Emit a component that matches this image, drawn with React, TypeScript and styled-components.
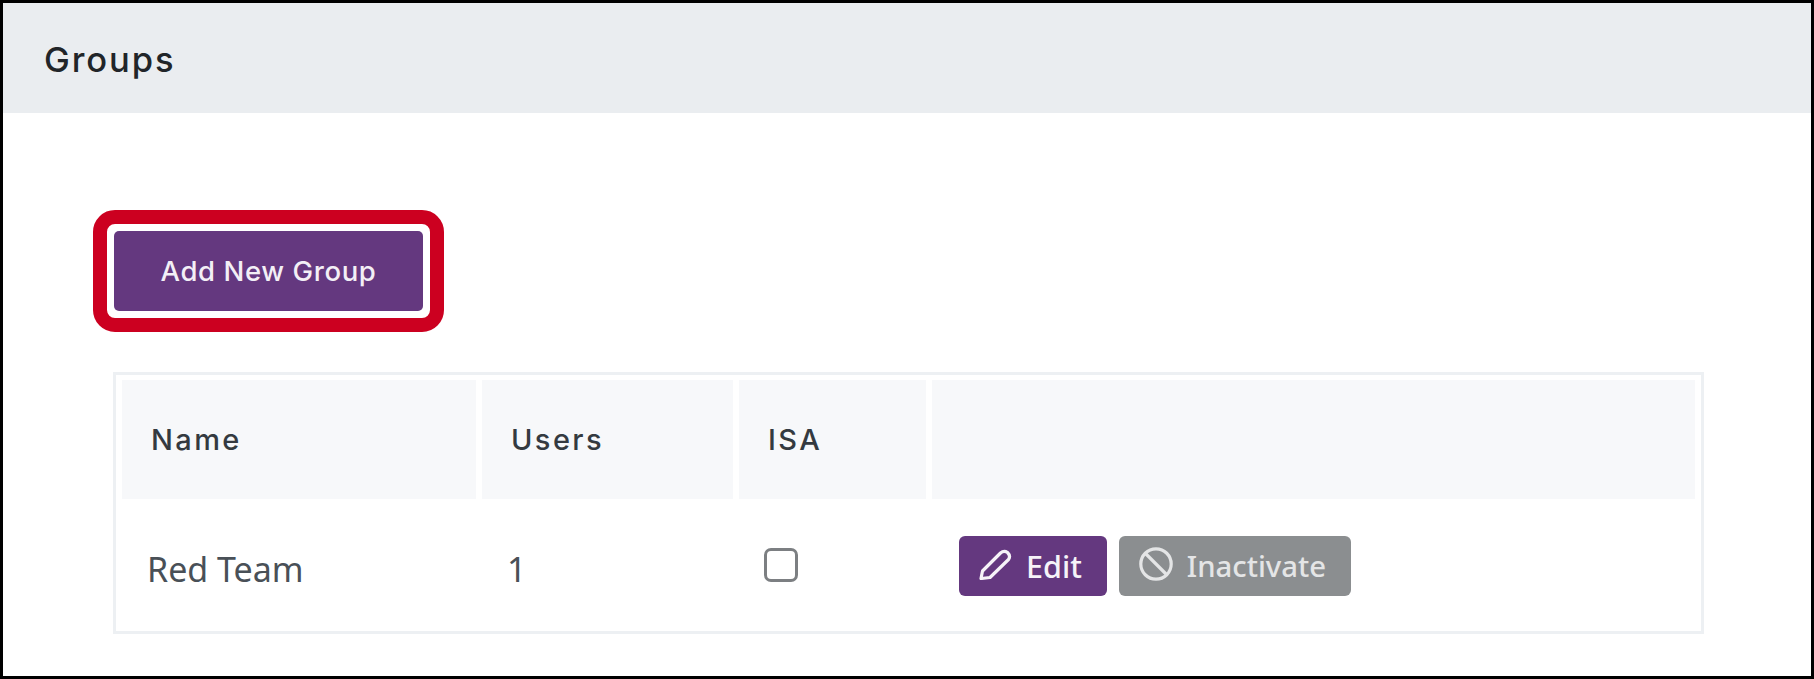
import * as React from "react"
import styled, {createGlobalStyle} from "styled-components"

const GlobalStyle = createGlobalStyle`
  html, body {
    margin: 0;
    padding: 0;
    background: #fff;
  }
`

const PencilIcon = () => (
    <svg width="33" height="31" viewBox="0 0 33 31" fill="none" stroke="currentColor" strokeWidth="3.2" strokeLinejoin="round">
        <path d="M2 29.5 L3.5 22 L21.5 4 Q25 1 28.5 3.5 Q32 7 29.5 10.5 L11 28.5 Z" />
    </svg>
)

const BanIcon = () => (
    <svg width="34" height="34" viewBox="0 0 34 34" fill="none" stroke="currentColor" strokeWidth="3.2">
        <circle cx="17" cy="17" r="15.2" />
        <path d="M6.5 6.5 L27.5 27.5" />
    </svg>
)

export default function App() {
    return (
        <>
            <GlobalStyle />
            <Frame>
                <PanelHeader>Groups</PanelHeader>
                <Callout>
                    <AddButton>Add New Group</AddButton>
                </Callout>
                <GroupsTable>
                    <colgroup>
                        <col width={354} />
                        <col width={251} />
                        <col width={187} />
                        <col />
                    </colgroup>
                    <thead>
                        <tr>
                            <HeadCell>Name</HeadCell>
                            <HeadCell>Users</HeadCell>
                            <HeadCell>ISA</HeadCell>
                            <HeadCell />
                        </tr>
                    </thead>
                    <tbody>
                        <tr>
                            <BodyCell>Red Team</BodyCell>
                            <BodyCell>1</BodyCell>
                            <ControlCell><CheckBox /></ControlCell>
                            <ActionsCell>
                                <Actions>
                                    <ActionButton><PencilIcon />Edit</ActionButton>
                                    <ActionButton $muted><BanIcon />Inactivate</ActionButton>
                                </Actions>
                            </ActionsCell>
                        </tr>
                    </tbody>
                </GroupsTable>
            </Frame>
        </>
    )
}

const Frame = styled("div")`
  width: 1814px;
  height: 679px;
  box-sizing: border-box;
  border: 3px solid #000;
  background: #fff;
  overflow: hidden;
  font-family: "Noto Sans", sans-serif;
`

const PanelHeader = styled("div")`
  height: 110px;
  box-sizing: border-box;
  padding: 2px 0 0 41px;
  display: flex;
  align-items: center;
  background: #eaedf0;
  color: #212529;
  font-family: "Inter", sans-serif;
  font-size: 34.5px;
  font-weight: 500;
  letter-spacing: 1.9px;
`

const Callout = styled("div")`
  width: fit-content;
  margin: 97px 0 40px 90px;
  padding: 7px;
  border: 14px solid #cc0020;
  border-radius: 22px;
  background: #fff;
`

const AddButton = styled("button")`
  display: block;
  width: 309px;
  height: 80px;
  border: none;
  border-radius: 5px;
  background: #64387f;
  color: #f3eff6;
  font-family: "Inter", sans-serif;
  font-size: 27.5px;
  font-weight: 500;
  letter-spacing: 0.6px;
`

const GroupsTable = styled("table")`
  width: 1591px;
  margin-left: 110px;
  box-sizing: border-box;
  border: 3px solid #edf0f3;
  border-collapse: separate;
  border-spacing: 6px 5px;
  table-layout: fixed;
`

const HeadCell = styled("th")`
  height: 119px;
  padding: 0 0 0 29px;
  box-sizing: border-box;
  background: #f7f8fa;
  color: #343a40;
  font-family: "Inter", sans-serif;
  font-size: 29px;
  font-weight: 500;
  letter-spacing: 2.4px;
  text-align: left;
`

const BodyCell = styled("td")`
  height: 122px;
  padding: 7px 0 0 25px;
  box-sizing: border-box;
  color: #495057;
  font-size: 34px;
  vertical-align: middle;
`

const ControlCell = styled(BodyCell)`
  padding-top: 0;
`

const ActionsCell = styled(BodyCell)`
  padding: 2px 0 0 27px;
`

const Actions = styled("div")`
  display: flex;
  gap: 12px;
`

const ActionButton = styled("button")<{$muted?: boolean}>`
  display: flex;
  align-items: center;
  gap: 14px;
  height: 60px;
  padding: 0 25px 0 20px;
  border: none;
  border-radius: 6px;
  background: ${(p) => (p.$muted ? "#8b8e90" : "#64387f")};
  color: ${(p) => (p.$muted ? "#e4e5e6" : "#f6f3f8")};
  font-family: "Noto Sans", sans-serif;
  font-size: ${(p) => (p.$muted ? "29.3px" : "30.5px")};
  font-weight: 500;

  svg {
    flex: none;
    margin-top: -4px;
  }
`

const CheckBox = styled("span")`
  display: block;
  width: 34px;
  height: 34px;
  box-sizing: border-box;
  border: 3px solid #7c7f82;
  border-radius: 7px;
  background: #fff;
`
